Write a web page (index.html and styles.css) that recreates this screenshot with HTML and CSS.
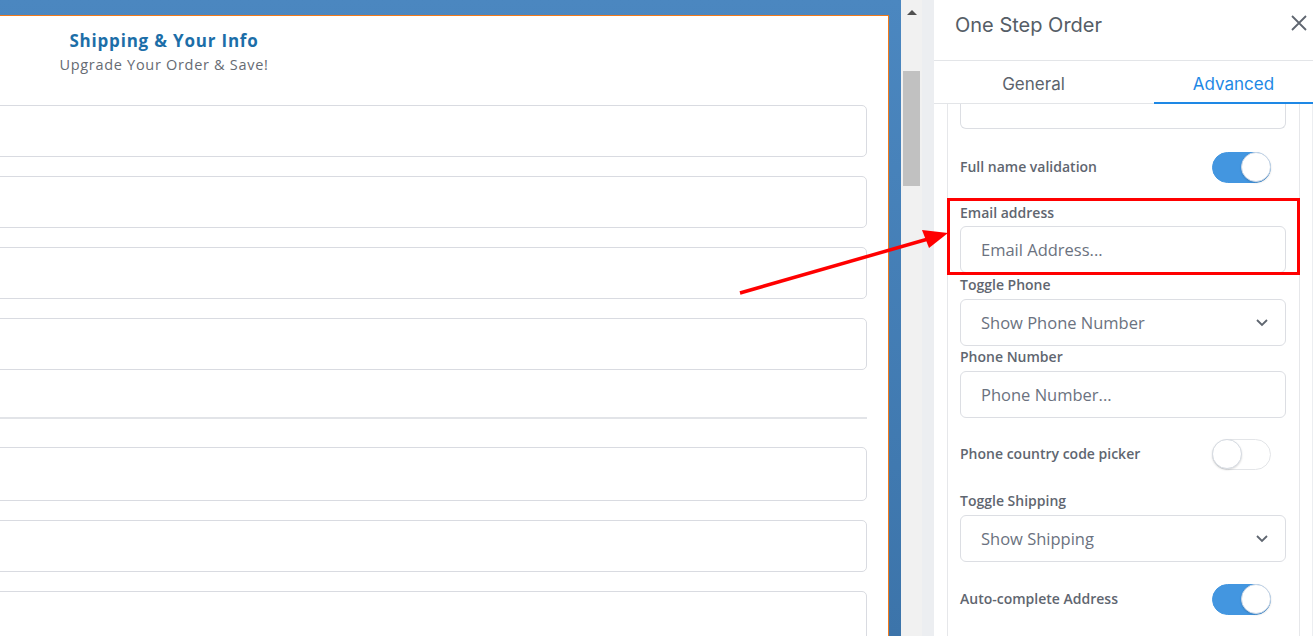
FILE: index.html
```html
<!DOCTYPE html>
<html>
<head>
<meta charset="utf-8">
<link rel="stylesheet" href="styles.css">
</head>
<body>
<div class="app">
  <div class="preview-area">
    <div class="preview">
      <div class="card">
        <div class="card-head">
          <div class="card-title">Shipping &amp; Your Info</div>
          <div class="card-sub">Upgrade Your Order &amp; Save!</div>
        </div>
        <div class="field"></div>
        <div class="field"></div>
        <div class="field"></div>
        <div class="field"></div>
        <div class="divider"></div>
        <div class="field tall"></div>
        <div class="field"></div>
        <div class="field"></div>
      </div>
    </div>
    <div class="scrollbar">
      <div class="scroll-up"></div>
      <div class="scroll-thumb"></div>
    </div>
  </div>
  <div class="gutter"></div>
  <div class="panel">
    <div class="panel-head">
      <div class="panel-title">One Step Order</div>
      <svg class="close" width="16" height="16" viewBox="0 0 16 16"><path d="M1 1L15 15M15 1L1 15" stroke="#5f6670" stroke-width="1.8" fill="none"/></svg>
    </div>
    <div class="tabs">
      <div class="tab">General</div>
      <div class="tab active">Advanced</div>
    </div>
    <div class="panel-body">
      <div class="settings">
        <div class="input partial"></div>
        <div class="toggle-row first">
          <span class="label">Full name validation</span>
          <span class="switch on"><span class="knob"></span></span>
        </div>
        <div class="group highlighted">
          <div class="label">Email address</div>
          <div class="input"><span class="ph">Email Address...</span></div>
        </div>
        <div class="group after-hl">
          <div class="label">Toggle Phone</div>
          <div class="input select"><span class="ph">Show Phone Number</span>
            <svg width="14" height="9" viewBox="0 0 14 9"><path d="M2 2L7 7L12 2" stroke="#5f6670" stroke-width="1.8" fill="none"/></svg>
          </div>
        </div>
        <div class="group">
          <div class="label">Phone Number</div>
          <div class="input"><span class="ph">Phone Number...</span></div>
        </div>
        <div class="toggle-row mid">
          <span class="label">Phone country code picker</span>
          <span class="switch"><span class="knob"></span></span>
        </div>
        <div class="group ship">
          <div class="label">Toggle Shipping</div>
          <div class="input select"><span class="ph">Show Shipping</span>
            <svg width="14" height="9" viewBox="0 0 14 9"><path d="M2 2L7 7L12 2" stroke="#5f6670" stroke-width="1.8" fill="none"/></svg>
          </div>
        </div>
        <div class="toggle-row last">
          <span class="label">Auto-complete Address</span>
          <span class="switch on"><span class="knob"></span></span>
        </div>
      </div>
      <div class="panel-scroll"></div>
    </div>
  </div>
</div>
<svg class="arrow" width="1313" height="636" viewBox="0 0 1313 636">
  <line x1="740" y1="293" x2="928" y2="239" stroke="#ff0000" stroke-width="3.5"/>
  <polygon points="948,233 922,230 929,248" fill="#ff0000"/>
</svg>
</body>
</html>
```

FILE: styles.css
```css
* { box-sizing: border-box; }
html, body { margin: 0; padding: 0; }
body {
  width: 1313px;
  height: 636px;
  overflow: hidden;
  background: #ffffff;
  font-family: "Open Sans", "Liberation Sans", sans-serif;
  position: relative;
}
.app {
  display: flex;
  height: 636px;
}
.preview-area {
  display: flex;
  width: 922px;
  flex: none;
}
.preview {
  width: 901px;
  background: linear-gradient(#4b87c0, #3c74aa);
  padding-top: 15px;
  padding-right: 12px;
}
.card {
  height: 100%;
  background: #ffffff;
  border-top: 1px solid #f07a1c;
  border-right: 1px solid #f07a1c;
  padding-right: 21px;
  overflow: hidden;
}
.card-head {
  width: 328px;
  text-align: center;
  height: 89px;
  padding-top: 14px;
}
.card-title {
  font-family: "Open Sans", sans-serif;
  font-weight: 700;
  font-size: 17px;
  letter-spacing: 0.8px;
  color: #1c6ea8;
  line-height: 22px;
}
.card-sub {
  font-family: "Open Sans", sans-serif;
  font-size: 14.5px;
  letter-spacing: 0.7px;
  color: #666b73;
  line-height: 20px;
  margin-top: 3px;
}
.field {
  height: 52px;
  margin-left: -10px;
  border: 1px solid #d9dbe1;
  border-radius: 5px;
  margin-bottom: 19px;
}
.divider {
  height: 2px;
  background: #e2e4e8;
  margin-left: -10px;
  margin-top: 47px;
  margin-bottom: 28px;
}
.field.tall { height: 54px; }
.scrollbar {
  width: 21px;
  background: #f1f1f1;
  display: flex;
  flex-direction: column;
  align-items: center;
}
.scroll-up {
  margin-top: 10px;
  width: 0;
  height: 0;
  border-left: 5px solid transparent;
  border-right: 5px solid transparent;
  border-bottom: 5px solid #505050;
}
.scroll-thumb {
  margin-top: 56px;
  width: 17px;
  height: 115px;
  background: #c1c1c1;
}
.gutter {
  width: 12px;
  flex: none;
  background: #eceef1;
}
.panel {
  width: 379px;
  flex: none;
  background: #ffffff;
  display: flex;
  flex-direction: column;
  font-family: "Inter", "Open Sans", sans-serif;
}
.panel-head {
  height: 61px;
  border-bottom: 1px solid #e3e5e8;
  display: flex;
  align-items: flex-start;
  justify-content: space-between;
  padding: 12px 6px 0 21px;
}
.panel-title {
  font-size: 20px;
  color: #555d66;
  line-height: 27px;
}
.close { margin-top: 3px; }
.tabs {
  display: flex;
  justify-content: space-between;
  height: 43px;
  border-bottom: 1px solid #e3e5e8;
}
.tab {
  width: 199px;
  text-align: center;
  font-size: 17px;
  color: #5c636c;
  line-height: 22px;
  padding-top: 12px;
}
.tab.active {
  width: 159px;
  color: #1e88e5;
  border-bottom: 2px solid #1e88e5;
  margin-bottom: -1px;
}
.panel-body {
  flex: 1;
  display: flex;
  padding-left: 13px;
  overflow: hidden;
}
.settings {
  width: 353px;
  border-left: 1px solid #e6e7ea;
  border-right: 1px solid #e6e7ea;
  padding: 0 13px 0 12px;
  font-family: "Open Sans", sans-serif;
}
.panel-scroll {
  flex: 1;
  border-right: 1px solid #eceef1;
}
.label {
  font-size: 14px;
  font-weight: 600;
  color: #5f6670;
  line-height: 18px;
}
.input {
  height: 47px;
  border: 1px solid #dcdee3;
  border-radius: 6px;
  display: flex;
  align-items: center;
  justify-content: space-between;
  padding: 0 16px 0 20px;
}
.input.partial {
  height: 25px;
  border-top: none;
  border-radius: 0 0 6px 6px;
}
.ph {
  font-family: "Open Sans", sans-serif;
  font-size: 16.5px;
  color: #6b7280;
}
.toggle-row {
  display: flex;
  align-items: center;
  justify-content: space-between;
  padding-right: 15px;
  height: 32px;
}
.toggle-row.first { margin-top: 22px; }
.toggle-row.mid { margin-top: 20px; }
.toggle-row.last { margin-top: 21px; }
.switch {
  width: 59px;
  height: 31px;
  border-radius: 16px;
  background: #ffffff;
  border: 1px solid #e3e5e8;
  display: flex;
  align-items: center;
  justify-content: flex-start;
}
.switch.on {
  background: #4396e0;
  border-color: #4396e0;
  justify-content: flex-end;
}
.knob {
  width: 30px;
  height: 30px;
  border-radius: 50%;
  background: #ffffff;
  border: 1px solid #d6dbe2;
  box-shadow: 0 1px 2px rgba(0,0,0,0.15);
}
.switch.on .knob { margin-right: -1px; border-color: #c9d6e6; }
.switch:not(.on) .knob { margin-left: -1px; }
.group {
  display: flex;
  flex-direction: column;
  gap: 5px;
  margin-top: 2px;
}
.group.after-hl { margin-top: 3px; }
.group.highlighted {
  gap: 4px;
  margin: 15px -14px 0 -13px;
  padding: 3px 11px 0 10px;
  border: 3px solid #ff0000;
  border-bottom: none;
  position: relative;
}
.group.highlighted::after {
  content: "";
  position: absolute;
  left: -3px;
  right: -3px;
  bottom: -2px;
  height: 3px;
  background: #ff0000;
}
.group.ship { margin-top: 22px; }
.arrow {
  position: absolute;
  left: 0;
  top: 0;
  pointer-events: none;
}
```
